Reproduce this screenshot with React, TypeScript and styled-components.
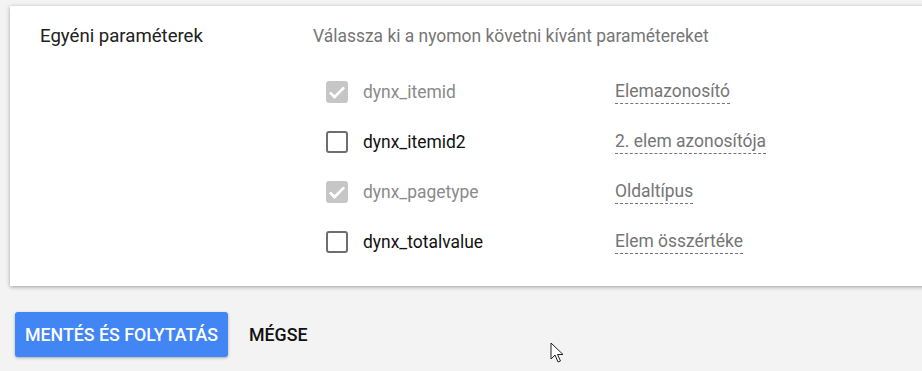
import React from "react";
import styled, { createGlobalStyle } from "styled-components";

const GlobalStyle = createGlobalStyle`
  html, body {
    margin: 0;
    padding: 0;
    background: #f3f3f3;
    font-family: Roboto, "Liberation Sans", Arial, sans-serif;
    overflow: hidden;
  }
`;

const Page = styled.div`
  position: relative;
  padding: 6px 0 0 10px;
  height: 371px;
  box-sizing: border-box;
`;

const Card = styled.section`
  background: #fff;
  margin-right: -20px;
  box-shadow: 0 1px 4px rgba(0, 0, 0, 0.35);
  padding: 19px 0 22px 30px;
  display: grid;
  grid-template-columns: 273px 1fr;
  height: 280px;
  box-sizing: border-box;
`;

const Title = styled.div`
  font-size: 18.6px;
  color: #212121;
  line-height: 22px;
`;

const Hint = styled.div`
  font-size: 17.45px;
  color: #757575;
  line-height: 22px;
  margin-bottom: 20px;
`;

const List = styled.div`
  display: flex;
  flex-direction: column;
`;

const Row = styled.label`
  display: grid;
  grid-template-columns: 37px 252px 1fr;
  align-items: center;
  height: 50px;
  padding-left: 13px;
  font-size: 17.45px;
`;

const Box = styled.span<{ $locked?: boolean }>`
  width: 22px;
  height: 22px;
  box-sizing: border-box;
  border-radius: 3px;
  display: flex;
  align-items: center;
  justify-content: center;
  background: ${(p) => (p.$locked ? "#c6c6c6" : "transparent")};
  border: ${(p) => (p.$locked ? "none" : "2px solid #6e6e6e")};
`;

const Name = styled.span<{ $locked?: boolean }>`
  color: ${(p) => (p.$locked ? "#8a8a8a" : "#111")};
`;

const Alias = styled.span`
  justify-self: start;
  color: #757575;
  padding-bottom: 1px;
  border-bottom: 1px dashed #757575;
  line-height: 21px;
`;

const Footer = styled.div`
  display: flex;
  align-items: center;
  gap: 4px;
  padding: 26px 0 0 5px;
`;

const Button = styled.button<{ $primary?: boolean }>`
  font-family: inherit;
  font-size: 17.8px;
  font-weight: 500;
  height: 45px;
  padding: 0 ${(p) => (p.$primary ? "10px" : "17px")};
  border: none;
  border-radius: 3px;
  cursor: pointer;
  color: ${(p) => (p.$primary ? "#fff" : "#111")};
  background: ${(p) => (p.$primary ? "#4285f4" : "transparent")};
  box-shadow: ${(p) => (p.$primary ? "0 1px 3px rgba(0,0,0,0.3)" : "none")};
`;

const Pointer = styled.svg`
  position: absolute;
  left: 550px;
  top: 342px;
`;

const params = [
  { name: "dynx_itemid", alias: "Elemazonosító", locked: true },
  { name: "dynx_itemid2", alias: "2. elem azonosítója", locked: false },
  { name: "dynx_pagetype", alias: "Oldaltípus", locked: true },
  { name: "dynx_totalvalue", alias: "Elem összértéke", locked: false },
];

export default function App() {
  return (
    <Page>
      <GlobalStyle />
      <Card>
        <Title>Egyéni paraméterek</Title>
        <div>
          <Hint>Válassza ki a nyomon követni kívánt paramétereket</Hint>
          <List>
            {params.map((p) => (
              <Row key={p.name}>
                <Box $locked={p.locked}>
                  {p.locked && (
                    <svg width="20" height="20" viewBox="0 0 24 24">
                      <path
                        d="M3.5 12.5l5.5 5.5L20.5 6.5"
                        fill="none"
                        stroke="#fff"
                        strokeWidth="3.2"
                      />
                    </svg>
                  )}
                </Box>
                <Name $locked={p.locked}>{p.name}</Name>
                <Alias>{p.alias}</Alias>
              </Row>
            ))}
          </List>
        </div>
      </Card>
      <Footer>
        <Button $primary>MENTÉS ÉS FOLYTATÁS</Button>
        <Button>MÉGSE</Button>
      </Footer>
      <Pointer width="14" height="22" viewBox="0 0 14 22">
        <path
          d="M1 1v16l4-4 3 7 2.5-1-3-6.5H13z"
          fill="#fff"
          stroke="#222"
          strokeWidth="1"
          strokeLinejoin="round"
        />
      </Pointer>
    </Page>
  );
}
